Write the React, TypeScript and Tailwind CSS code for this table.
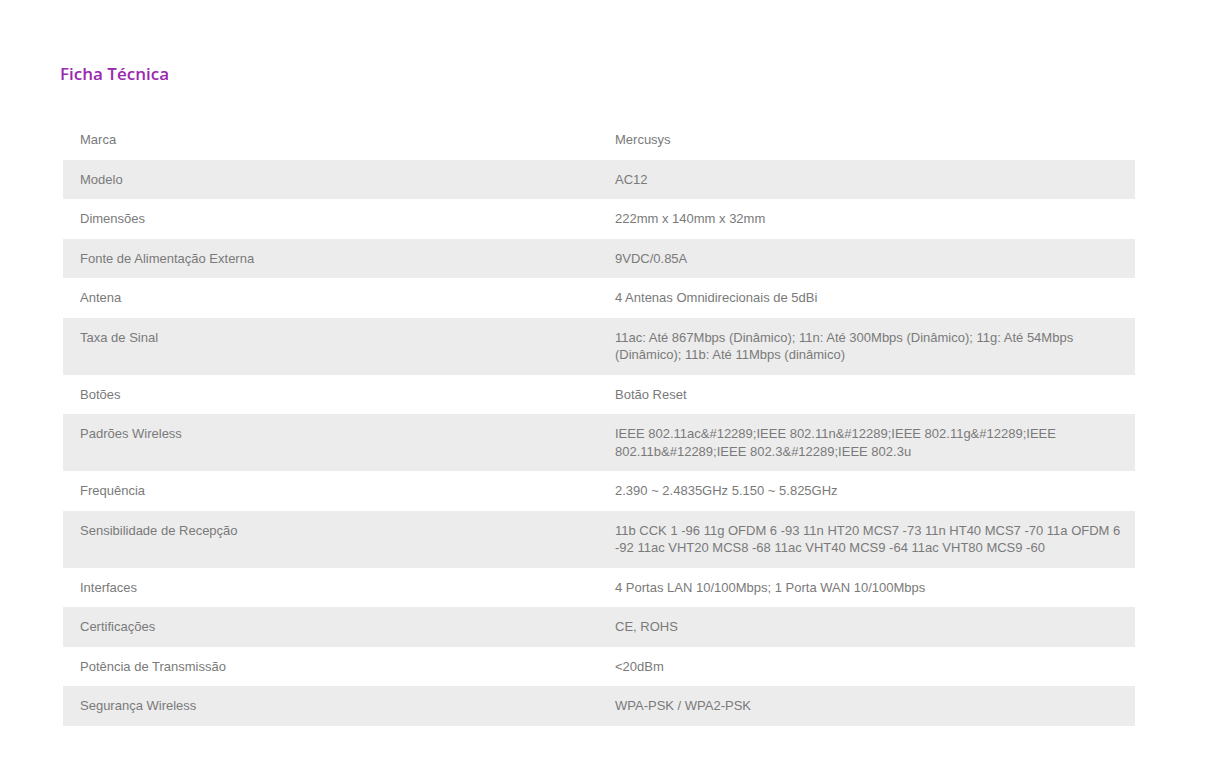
const rows: [string, string][] = [
  ['Marca', 'Mercusys'],
  ['Modelo', 'AC12'],
  ['Dimensões', '222mm x 140mm x 32mm'],
  ['Fonte de Alimentação Externa', '9VDC/0.85A'],
  ['Antena', '4 Antenas Omnidirecionais de 5dBi'],
  [
    'Taxa de Sinal',
    '11ac: Até 867Mbps (Dinâmico); 11n: Até 300Mbps (Dinâmico); 11g: Até 54Mbps (Dinâmico); 11b: Até 11Mbps (dinâmico)',
  ],
  ['Botões', 'Botão Reset'],
  [
    'Padrões Wireless',
    'IEEE 802.11ac&#12289;IEEE 802.11n&#12289;IEEE 802.11g&#12289;IEEE 802.11b&#12289;IEEE 802.3&#12289;IEEE 802.3u',
  ],
  ['Frequência', '2.390 ~ 2.4835GHz 5.150 ~ 5.825GHz'],
  [
    'Sensibilidade de Recepção',
    '11b CCK 1 -96 11g OFDM 6 -93 11n HT20 MCS7 -73 11n HT40 MCS7 -70 11a OFDM 6 -92 11ac VHT20 MCS8 -68 11ac VHT40 MCS9 -64 11ac VHT80 MCS9 -60',
  ],
  ['Interfaces', '4 Portas LAN 10/100Mbps; 1 Porta WAN 10/100Mbps'],
  ['Certificações', 'CE, ROHS'],
  ['Potência de Transmissão', '<20dBm'],
  ['Segurança Wireless', 'WPA-PSK / WPA2-PSK'],
];

export default function App() {
  return (
    <div className="min-h-screen bg-white pt-[62px] pl-[60px] pr-[83px]">
      <h2 className="font-['Open_Sans',sans-serif] text-[17px] font-semibold leading-[24px] text-[#9b27af]">
        Ficha Técnica
      </h2>

      <table className="mt-[34px] ml-[3px] w-[1072px] table-fixed border-collapse font-['Liberation_Sans',Arial,sans-serif] text-[13px] leading-[17.5px] text-[#7a7a7a]">
        <tbody>
          {rows.map(([label, value], i) => (
            <tr key={label} className={i % 2 === 1 ? 'bg-[#ececec]' : 'bg-white'}>
              <td className="w-[535px] py-[11px] pl-[17px] pr-[17px] align-top">{label}</td>
              <td className="py-[11px] pl-[17px] pr-[8px] align-top">{value}</td>
            </tr>
          ))}
        </tbody>
      </table>
    </div>
  );
}
